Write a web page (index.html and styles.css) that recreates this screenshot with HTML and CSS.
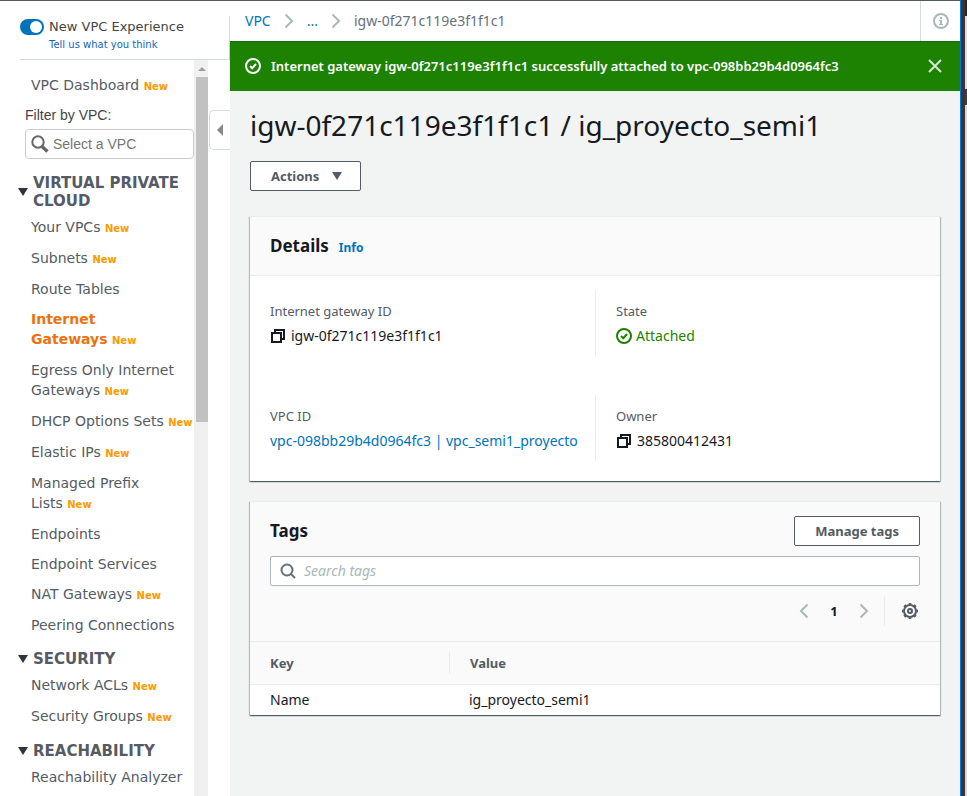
FILE: index.html
```html
<!DOCTYPE html>
<html lang="en">
<head>
<meta charset="utf-8">
<title>Internet gateways | VPC</title>
<link rel="stylesheet" href="styles.css">
</head>
<body>
<div class="window">
  <aside class="sidebar">
    <header class="side-head">
      <input type="checkbox" class="toggle" id="new-exp" checked>
      <div>
        <label for="new-exp" class="exp-label">New VPC Experience</label>
        <a href="#" class="feedback">Tell us what you think</a>
      </div>
    </header>
    <div class="side-body">
      <nav class="nav">
        <ul class="nav-list nav-top">
          <li><a href="#">VPC Dashboard</a> <span class="new">New</span></li>
        </ul>
        <label for="vpc-filter" class="filter-label">Filter by VPC:</label>
        <div class="filter">
          <svg width="18" height="18" viewBox="0 0 18 18"><circle cx="7" cy="7" r="5.7" fill="none" stroke="#666" stroke-width="2"/><path d="M11 11.5l5.5 5" stroke="#666" stroke-width="3.4"/></svg>
          <input type="text" id="vpc-filter" placeholder="Select a VPC">
        </div>
        <h3 class="group"><span class="tri"></span>VIRTUAL PRIVATE CLOUD</h3>
        <ul class="nav-list">
          <li><a href="#">Your VPCs</a> <span class="new">New</span></li>
          <li><a href="#">Subnets</a> <span class="new">New</span></li>
          <li><a href="#">Route Tables</a></li>
          <li class="current"><a href="#">Internet<br>Gateways</a> <span class="new">New</span></li>
          <li><a href="#">Egress Only Internet<br>Gateways</a> <span class="new">New</span></li>
          <li><a href="#">DHCP Options Sets</a> <span class="new">New</span></li>
          <li><a href="#">Elastic IPs</a> <span class="new">New</span></li>
          <li><a href="#">Managed Prefix<br>Lists</a> <span class="new">New</span></li>
          <li><a href="#">Endpoints</a></li>
          <li><a href="#">Endpoint Services</a></li>
          <li><a href="#">NAT Gateways</a> <span class="new">New</span></li>
          <li><a href="#">Peering Connections</a></li>
        </ul>
        <h3 class="group"><span class="tri"></span>SECURITY</h3>
        <ul class="nav-list">
          <li><a href="#">Network ACLs</a> <span class="new">New</span></li>
          <li><a href="#">Security Groups</a> <span class="new">New</span></li>
        </ul>
        <h3 class="group"><span class="tri"></span>REACHABILITY</h3>
        <ul class="nav-list">
          <li><a href="#">Reachability Analyzer</a></li>
        </ul>
      </nav>
      <div class="scrollbar"><span class="scroll-up"></span><span class="thumb"></span></div>
      <div class="gutter">
        <button class="collapse" aria-label="Collapse navigation"><span></span></button>
      </div>
    </div>
  </aside>

  <main class="main">
    <div class="topbar">
      <nav class="crumbs">
        <a href="#">VPC</a>
        <svg width="10" height="16" viewBox="0 0 10 16"><path d="M1.5 1.5L8 8l-6.500 6.500"/></svg>
        <a href="#">...</a>
        <svg width="10" height="16" viewBox="0 0 10 16"><path d="M1.5 1.5L8 8l-6.500 6.500"/></svg>
        <span>igw-0f271c119e3f1f1c1</span>
      </nav>
      <button class="help" aria-label="Information">
        <svg width="16" height="16" viewBox="0 0 16 16"><circle cx="8" cy="8" r="7" fill="none" stroke="#aab7b8" stroke-width="2"/><path d="M7 4h2v2H7zM6 7h3v4h1v1H6v-1h1V8H6z" fill="#aab7b8"/></svg>
      </button>
    </div>

    <div class="flash" role="status">
      <svg width="16" height="16" viewBox="0 0 16 16" fill="none" stroke="#fff" stroke-width="2"><circle cx="8" cy="8" r="7"/><path d="M5 8l2.200 2.200L11 6"/></svg>
      <p>Internet gateway igw-0f271c119e3f1f1c1 successfully attached to vpc-098bb29b4d0964fc3</p>
      <button class="close" aria-label="Dismiss">
        <svg width="14" height="14" viewBox="0 0 14 14" stroke="#d5e8d0" stroke-width="2"><path d="M1 1l12 12M13 1L1 13"/></svg>
      </button>
    </div>

    <div class="content">
      <h1>igw-0f271c119e3f1f1c1 / ig_proyecto_semi1</h1>
      <button class="btn actions">Actions <span class="caret"></span></button>

      <section class="panel details">
        <header class="panel-head">
          <h2>Details</h2>
          <a href="#" class="info">Info</a>
        </header>
        <dl class="grid">
          <div><dt>Internet gateway ID</dt><dd>
            <svg class="copy" width="16" height="16" viewBox="0 0 16 16"><path d="M5 4.500V2h9v9h-2.500M2 5h9v9H2z"/></svg>igw-0f271c119e3f1f1c1</dd></div>
          <div><dt>State</dt><dd class="ok">
            <svg width="16" height="16" viewBox="0 0 16 16" fill="none" stroke="#1d8102" stroke-width="2"><circle cx="8" cy="8" r="7"/><path d="M5 8l2.200 2.200L11 6"/></svg>Attached</dd></div>
          <div><dt>VPC ID</dt><dd><a href="#">vpc-098bb29b4d0964fc3 | vpc_semi1_proyecto</a></dd></div>
          <div><dt>Owner</dt><dd>
            <svg class="copy" width="16" height="16" viewBox="0 0 16 16"><path d="M5 4.500V2h9v9h-2.500M2 5h9v9H2z"/></svg>385800412431</dd></div>
        </dl>
      </section>

      <section class="panel tags">
        <div class="tags-head">
          <div class="title-row">
            <h2>Tags</h2>
            <button class="btn">Manage tags</button>
          </div>
          <div class="search">
            <svg width="16" height="16" viewBox="0 0 16 16" fill="none" stroke="#687078" stroke-width="2"><circle cx="7" cy="7" r="5.500"/><path d="M11 11l4 4"/></svg>
            <input type="text" aria-label="Search tags" placeholder="Search tags">
          </div>
          <div class="pager">
            <button aria-label="Previous page"><svg width="10" height="16" viewBox="0 0 10 16"><path d="M8.500 1.500L2 8l6.500 6.500"/></svg></button>
            <button class="page">1</button>
            <button aria-label="Next page"><svg width="10" height="16" viewBox="0 0 10 16"><path d="M1.500 1.500L8 8l-6.500 6.500"/></svg></button>
            <button class="prefs" aria-label="Preferences">
              <svg width="16" height="16" viewBox="0 0 16 16" fill="none" stroke="#545b64"><circle cx="8" cy="8" r="6" stroke-width="2"/><circle cx="8" cy="8" r="7.200" stroke-width="1.600" pathLength="80" stroke-dasharray="5 5" stroke-dashoffset="2.500"/><circle cx="8" cy="8" r="2" stroke-width="2"/></svg>
            </button>
          </div>
        </div>
        <table>
          <thead><tr><th scope="col">Key</th><th scope="col"><span>Value</span></th></tr></thead>
          <tbody><tr><td>Name</td><td>ig_proyecto_semi1</td></tr></tbody>
        </table>
      </section>
    </div>
  </main>

  <div class="edge"></div>
</div>
</body>
</html>
```
FILE: styles.css
```css
* { box-sizing: border-box; }

body {
  margin: 0;
  background: #fff;
  color: #16191f;
  font: 14px/22px "Noto Sans", sans-serif;
}

h1, h2, h3, p, ul, dl, dd { margin: 0; padding: 0; }
ul { list-style: none; }
a { color: #0073bb; text-decoration: none; }
svg { display: block; flex: none; }

button {
  padding: 0;
  border: 0;
  background: none;
  font: inherit;
  cursor: pointer;
}

.window { display: flex; min-height: 100vh; }

/* Sidebar */
.sidebar {
  flex: none;
  display: flex;
  flex-direction: column;
  width: 230px;
  border-top: 1px solid #545b64;
  font-family: "DejaVu Sans", sans-serif;
}

.side-head {
  display: flex;
  gap: 5px;
  height: 44px;
  margin: 15px 0 0 20px;
  padding-top: 2px;
  border-right: 1px solid #d5dbdb;
  border-bottom: 1px solid #d5dbdb;
}

.toggle {
  appearance: none;
  flex: none;
  width: 24px;
  height: 16px;
  margin: 1px 0 0;
  padding: 2px;
  border-radius: 8px;
  background: #0073bb;
}

.toggle::before {
  content: "";
  display: block;
  width: 12px;
  height: 12px;
  margin-left: 8px;
  border-radius: 50%;
  background: #fff;
}

.exp-label { display: block; color: #444; font-size: 13px; line-height: 18px; }
.feedback { display: block; color: #1166bb; font-size: 10px; line-height: 18px; }

.side-body { flex: 1; display: flex; }

.nav { flex: 1; min-width: 0; padding-top: 15px; }

.nav-list { padding-left: 31px; font-size: 14px; line-height: 20px; white-space: nowrap; }
.nav-list li { margin-bottom: 10px; }
.nav-list li:has(.new) { margin-bottom: 11px; }
.nav-list a { color: #545b64; }
.nav-list .current a { color: #ec7211; font-weight: bold; }
.new { color: #ff9900; font-size: 10px; font-weight: bold; line-height: 16px; }

.filter-label {
  display: block;
  padding-left: 25px;
  color: #444;
  font: 14px/18px "Liberation Sans", sans-serif;
}

.filter {
  display: flex;
  align-items: center;
  gap: 4px;
  height: 30px;
  margin: 5px 0 15px 25px;
  padding-left: 5px;
  border: 1px solid #ccc;
  border-radius: 4px;
}

.filter input {
  flex: 1;
  min-width: 0;
  padding: 0;
  border: 0;
  outline: 0;
  background: none;
  font: 14px "Liberation Sans", sans-serif;
}
.filter input::placeholder { color: #757575; }

.group {
  display: flex;
  align-items: center;
  gap: 5px;
  padding: 0 5px 7px 18px;
  color: #545b64;
  font-size: 15px;
  line-height: 18px;
}

.nav-list + .group { padding-top: 5px; }

.tri {
  flex: none;
  border: 5px solid transparent;
  border-top: 8px solid #2f343b;
  border-bottom: 0;
}

.scrollbar {
  flex: none;
  display: flex;
  flex-direction: column;
  align-items: center;
  width: 14px;
  padding: 7px 0 0 2px;
  background: #f0f0f0;
}

.scroll-up {
  border: 4px solid transparent;
  border-bottom-color: #a0a0a0;
  border-top: 0;
  margin-bottom: 6px;
}

.thumb { width: 12px; height: 345px; background: #c1c1c1; }

.gutter { flex: none; width: 22px; padding: 50px 0 0 1px; }

.collapse {
  display: flex;
  align-items: center;
  width: 21px;
  height: 40px;
  padding-left: 7px;
  border: 1px solid #d5dbdb;
  border-right: 0;
  border-radius: 5px 0 0 5px;
}

.collapse span { border: 6px solid transparent; border-right-color: #888; border-left: 0; }

/* Main column */
.main {
  flex: 1;
  display: flex;
  flex-direction: column;
  min-width: 0;
  border-top: 1px solid #545b64;
}

.topbar { display: flex; height: 40px; }

.crumbs { flex: 1; display: flex; align-items: center; gap: 13px; padding-left: 15px; color: #687078; }
.crumbs path, .pager path { fill: none; stroke: #aab7b8; stroke-width: 2; }

.help {
  display: grid;
  place-items: center;
  width: 40px;
  border-left: 1px solid #d5dbdb;
}

.flash {
  display: flex;
  align-items: center;
  gap: 10px;
  min-height: 50px;
  padding: 0 18px 0 15px;
  background: #1d8102;
  box-shadow: inset 0 1px 0 #17660a, 0 1px 1px #879596;
  color: #fff;
  font-size: 13px;
  font-weight: 600;
}

.flash p { flex: 1; }

.content { flex: 1; padding: 16px 20px 20px; background: #f2f3f3; }

h1 { font-size: 28px; font-weight: 400; line-height: 36px; }

.btn {
  height: 30px;
  padding: 0 20px;
  border: 1px solid #545b64;
  border-radius: 2px;
  background: #fff;
  color: #545b64;
  font-size: 13px;
  font-weight: 700;
}

.actions { display: flex; align-items: center; gap: 13px; margin-top: 18px; padding-right: 18px; }
.caret { border: 5px solid transparent; border-top: 8px solid #545b64; border-bottom: 0; }

.panel {
  border-top: 1px solid #eaeded;
  background: #fff;
  box-shadow: 0 1px 1px 0 rgba(0, 28, 36, 0.5), 1px 1px 1px 0 rgba(0, 28, 36, 0.2), -1px 1px 1px 0 rgba(0, 28, 36, 0.2);
}

h2 { font-size: 17px; font-weight: 700; line-height: 22px; }

.details { margin-top: 25px; }

.panel-head {
  display: flex;
  align-items: baseline;
  gap: 10px;
  padding: 18px 20px;
  border-bottom: 1px solid #eaeded;
  background: #fafafa;
}

.info { font-size: 12px; font-weight: 700; line-height: 16px; }

.grid { display: grid; grid-template-columns: 1fr 1fr; row-gap: 39px; padding: 14px 0 20px; }
.grid > div { min-width: 0; padding: 10px 20px 9px; }
.grid > div:nth-child(even) { border-left: 1px solid #eaeded; }
.grid dt { margin-bottom: 3px; color: #545b64; font-size: 13px; }
.grid dd { display: flex; align-items: center; gap: 5px; white-space: nowrap; }
.grid .ok { gap: 4px; color: #1d8102; }
.copy path { fill: none; stroke: #16191f; stroke-width: 2; }

.tags { margin-top: 20px; }
.tags-head { padding: 14px 20px 15px; background: #fafafa; }
.title-row { display: flex; justify-content: space-between; align-items: center; }

.search {
  display: flex;
  align-items: center;
  gap: 8px;
  height: 30px;
  margin: 10px 0;
  padding: 0 9px;
  border: 1px solid #aab7b8;
  border-radius: 2px;
  background: #fff;
}

.search input { flex: 1; min-width: 0; padding: 0; border: 0; outline: 0; background: none; font: inherit; }
.search input::placeholder { color: #aab7b8; font-style: italic; }

.pager { display: flex; justify-content: flex-end; align-items: center; height: 30px; }
.page { width: 50px; color: #16191f; font-size: 13px; font-weight: 700; }

.prefs {
  display: grid;
  place-items: center end;
  width: 36px;
  height: 30px;
  margin-left: 15px;
  padding-right: 2px;
  border-left: 1px solid #eaeded;
}

table { width: 100%; border-collapse: collapse; table-layout: fixed; }
th, td { padding: 0 20px; text-align: left; }
th {
  height: 43px;
  border-top: 1px solid #eaeded;
  border-bottom: 1px solid #eaeded;
  background: #fafafa;
  color: #545b64;
  font-size: 13px;
}
th:first-child { width: 199px; }
th span { display: block; margin-left: -20px; padding-left: 20px; border-left: 1px solid #eaeded; }
td { height: 30px; }

/* Window frame on the right */
.edge {
  flex: none;
  width: 7px;
  border-left: 1px solid #0078d7;
  background:
    linear-gradient(90deg, #33363b 4px, transparent 4px),
    linear-gradient(#24282d 16px, #dedede 16px, #dedede 89px, #3b3f44 89px, #3b3f44 105px, #d8d8d8 105px);
}
```
